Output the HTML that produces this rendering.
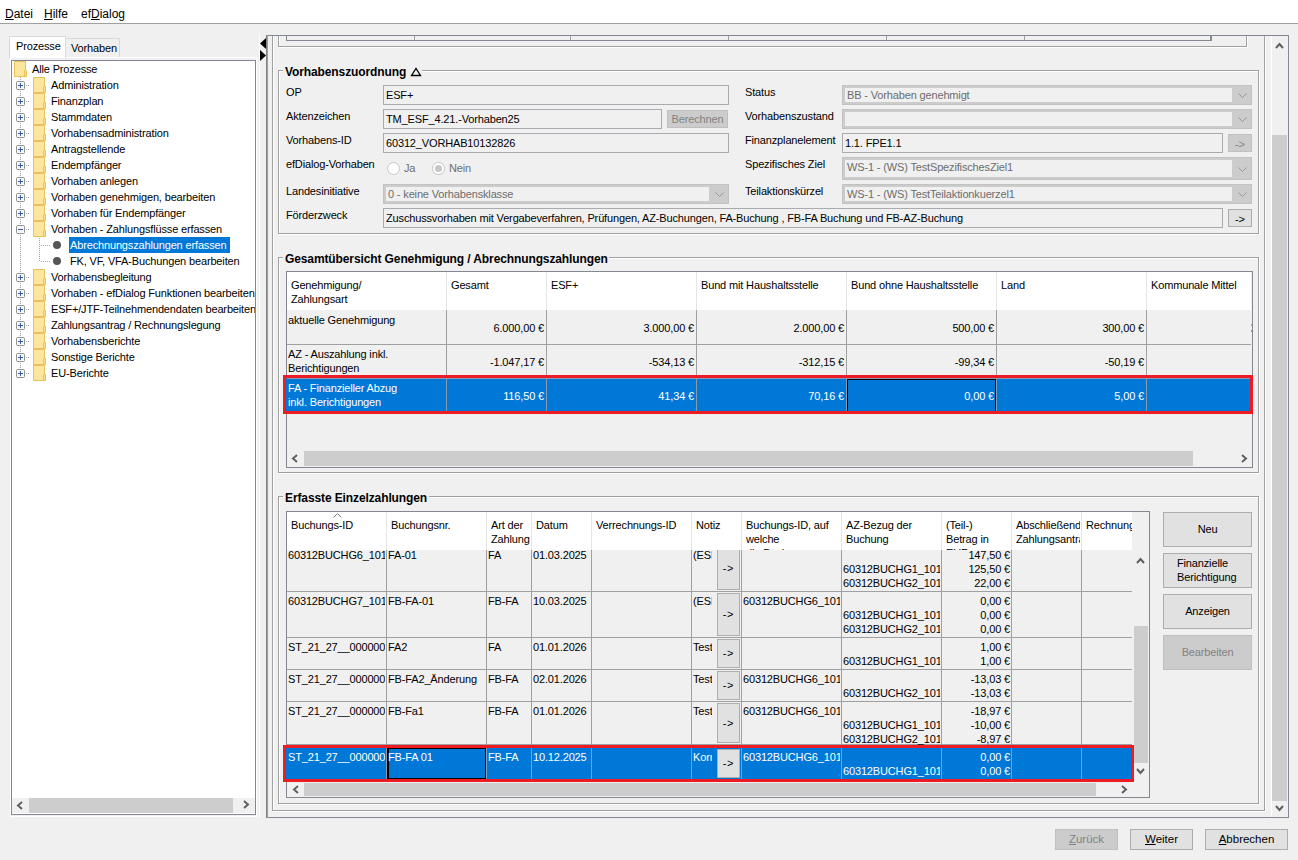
<!DOCTYPE html><html><head><meta charset="utf-8"><style>
*{margin:0;padding:0}
html,body{width:1298px;height:860px;overflow:hidden;background:#f0f0f0;position:relative}
.a{position:absolute}
.t{font-family:"Liberation Sans",sans-serif;font-size:11px;line-height:13px;white-space:nowrap;color:#000;letter-spacing:-0.15px}
.b{font-family:"Liberation Sans",sans-serif;font-size:12px;font-weight:bold;line-height:13px;white-space:nowrap;color:#000;letter-spacing:-0.11px}
.w{color:#fff}
.g{color:#6d6d6d}
svg{display:block}
u{text-decoration:underline;text-underline-offset:1px;text-decoration-thickness:1px}
</style></head><body><div class="a" style="left:0px;top:0px;width:1298px;height:23px;background:#fff"></div>
<div class="a" style="left:0px;top:23px;width:1298px;height:1px;background:#a0a0a0"></div>
<div class="a t" style="left:5px;top:7px;font-size:12px;letter-spacing:0;line-height:14px"><u>D</u>atei</div>
<div class="a t" style="left:44px;top:7px;font-size:12px;letter-spacing:0;line-height:14px"><u>H</u>ilfe</div>
<div class="a t" style="left:81px;top:7px;font-size:12px;letter-spacing:0;line-height:14px">ef<u>D</u>ialog</div>
<div class="a" style="left:10px;top:57px;width:247px;height:760px;border:1px solid #fff;box-sizing:border-box;"></div>
<div class="a" style="left:65px;top:38px;width:55px;height:19px;background:#f0f0f0;border:1px solid #d9d9d9;border-bottom:none;box-sizing:border-box"></div>
<div class="a" style="left:9px;top:36px;width:57px;height:22px;background:#fff;border:1px solid #d9d9d9;border-bottom:none;box-sizing:border-box"></div>
<div class="a t" style="left:16px;top:40px;">Prozesse</div>
<div class="a t" style="left:71px;top:42px;">Vorhaben</div>
<div class="a" style="left:11px;top:60px;width:245px;height:755px;border:1px solid #828790;box-sizing:border-box;background:#fff;"></div>
<div class="a" style="left:12px;top:61px;width:243px;height:736px;overflow:hidden">
<div class="a" style="left:8px;top:16px;width:1px;height:296px;background:repeating-linear-gradient(to bottom,#a0a0a0 0 1px,transparent 1px 2px)"></div>
<div class="a" style="left:27px;top:192px;width:1px;height:16px"></div>
<div class="a" style="left:2px;top:0px;width:13px;height:16px"><svg width="13" height="16" viewBox="0 0 13 16"><path d="M0.5 0.5H11.5V9.5H12.5V15.5H0.5Z" fill="#fbe08f" stroke="#e8c15a"/><path d="M1 1H11V15H1Z" fill="#fde9a8" opacity="0.6"/><path d="M10.5 9.5V15.5" stroke="#e8c15a"/></svg></div>
<div class="a t" style="left:20px;top:2px">Alle Prozesse</div>
<div class="a" style="left:14px;top:24px;width:4px;height:1px;background:repeating-linear-gradient(to right,#a0a0a0 0 1px,transparent 1px 2px)"></div>
<div class="a" style="left:4px;top:20px;width:9px;height:9px"><svg width="9" height="9"><rect x="0.5" y="0.5" width="8" height="8" rx="1" fill="#f7f7f7" stroke="#919191"/><path d="M2 4.5H7" stroke="#3b5ca0"/><path d="M4.5 2V7" stroke="#3b5ca0"/></svg></div>
<div class="a" style="left:21px;top:16px;width:13px;height:16px"><svg width="13" height="16" viewBox="0 0 13 16"><path d="M0.5 0.5H11.5V9.5H12.5V15.5H0.5Z" fill="#fbe08f" stroke="#e8c15a"/><path d="M1 1H11V15H1Z" fill="#fde9a8" opacity="0.6"/><path d="M10.5 9.5V15.5" stroke="#e8c15a"/></svg></div>
<div class="a t" style="left:39px;top:18px">Administration</div>
<div class="a" style="left:14px;top:40px;width:4px;height:1px;background:repeating-linear-gradient(to right,#a0a0a0 0 1px,transparent 1px 2px)"></div>
<div class="a" style="left:4px;top:36px;width:9px;height:9px"><svg width="9" height="9"><rect x="0.5" y="0.5" width="8" height="8" rx="1" fill="#f7f7f7" stroke="#919191"/><path d="M2 4.5H7" stroke="#3b5ca0"/><path d="M4.5 2V7" stroke="#3b5ca0"/></svg></div>
<div class="a" style="left:21px;top:32px;width:13px;height:16px"><svg width="13" height="16" viewBox="0 0 13 16"><path d="M0.5 0.5H11.5V9.5H12.5V15.5H0.5Z" fill="#fbe08f" stroke="#e8c15a"/><path d="M1 1H11V15H1Z" fill="#fde9a8" opacity="0.6"/><path d="M10.5 9.5V15.5" stroke="#e8c15a"/></svg></div>
<div class="a t" style="left:39px;top:34px">Finanzplan</div>
<div class="a" style="left:14px;top:56px;width:4px;height:1px;background:repeating-linear-gradient(to right,#a0a0a0 0 1px,transparent 1px 2px)"></div>
<div class="a" style="left:4px;top:52px;width:9px;height:9px"><svg width="9" height="9"><rect x="0.5" y="0.5" width="8" height="8" rx="1" fill="#f7f7f7" stroke="#919191"/><path d="M2 4.5H7" stroke="#3b5ca0"/><path d="M4.5 2V7" stroke="#3b5ca0"/></svg></div>
<div class="a" style="left:21px;top:48px;width:13px;height:16px"><svg width="13" height="16" viewBox="0 0 13 16"><path d="M0.5 0.5H11.5V9.5H12.5V15.5H0.5Z" fill="#fbe08f" stroke="#e8c15a"/><path d="M1 1H11V15H1Z" fill="#fde9a8" opacity="0.6"/><path d="M10.5 9.5V15.5" stroke="#e8c15a"/></svg></div>
<div class="a t" style="left:39px;top:50px">Stammdaten</div>
<div class="a" style="left:14px;top:72px;width:4px;height:1px;background:repeating-linear-gradient(to right,#a0a0a0 0 1px,transparent 1px 2px)"></div>
<div class="a" style="left:4px;top:68px;width:9px;height:9px"><svg width="9" height="9"><rect x="0.5" y="0.5" width="8" height="8" rx="1" fill="#f7f7f7" stroke="#919191"/><path d="M2 4.5H7" stroke="#3b5ca0"/><path d="M4.5 2V7" stroke="#3b5ca0"/></svg></div>
<div class="a" style="left:21px;top:64px;width:13px;height:16px"><svg width="13" height="16" viewBox="0 0 13 16"><path d="M0.5 0.5H11.5V9.5H12.5V15.5H0.5Z" fill="#fbe08f" stroke="#e8c15a"/><path d="M1 1H11V15H1Z" fill="#fde9a8" opacity="0.6"/><path d="M10.5 9.5V15.5" stroke="#e8c15a"/></svg></div>
<div class="a t" style="left:39px;top:66px">Vorhabensadministration</div>
<div class="a" style="left:14px;top:88px;width:4px;height:1px;background:repeating-linear-gradient(to right,#a0a0a0 0 1px,transparent 1px 2px)"></div>
<div class="a" style="left:4px;top:84px;width:9px;height:9px"><svg width="9" height="9"><rect x="0.5" y="0.5" width="8" height="8" rx="1" fill="#f7f7f7" stroke="#919191"/><path d="M2 4.5H7" stroke="#3b5ca0"/><path d="M4.5 2V7" stroke="#3b5ca0"/></svg></div>
<div class="a" style="left:21px;top:80px;width:13px;height:16px"><svg width="13" height="16" viewBox="0 0 13 16"><path d="M0.5 0.5H11.5V9.5H12.5V15.5H0.5Z" fill="#fbe08f" stroke="#e8c15a"/><path d="M1 1H11V15H1Z" fill="#fde9a8" opacity="0.6"/><path d="M10.5 9.5V15.5" stroke="#e8c15a"/></svg></div>
<div class="a t" style="left:39px;top:82px">Antragstellende</div>
<div class="a" style="left:14px;top:104px;width:4px;height:1px;background:repeating-linear-gradient(to right,#a0a0a0 0 1px,transparent 1px 2px)"></div>
<div class="a" style="left:4px;top:100px;width:9px;height:9px"><svg width="9" height="9"><rect x="0.5" y="0.5" width="8" height="8" rx="1" fill="#f7f7f7" stroke="#919191"/><path d="M2 4.5H7" stroke="#3b5ca0"/><path d="M4.5 2V7" stroke="#3b5ca0"/></svg></div>
<div class="a" style="left:21px;top:96px;width:13px;height:16px"><svg width="13" height="16" viewBox="0 0 13 16"><path d="M0.5 0.5H11.5V9.5H12.5V15.5H0.5Z" fill="#fbe08f" stroke="#e8c15a"/><path d="M1 1H11V15H1Z" fill="#fde9a8" opacity="0.6"/><path d="M10.5 9.5V15.5" stroke="#e8c15a"/></svg></div>
<div class="a t" style="left:39px;top:98px">Endempfänger</div>
<div class="a" style="left:14px;top:120px;width:4px;height:1px;background:repeating-linear-gradient(to right,#a0a0a0 0 1px,transparent 1px 2px)"></div>
<div class="a" style="left:4px;top:116px;width:9px;height:9px"><svg width="9" height="9"><rect x="0.5" y="0.5" width="8" height="8" rx="1" fill="#f7f7f7" stroke="#919191"/><path d="M2 4.5H7" stroke="#3b5ca0"/><path d="M4.5 2V7" stroke="#3b5ca0"/></svg></div>
<div class="a" style="left:21px;top:112px;width:13px;height:16px"><svg width="13" height="16" viewBox="0 0 13 16"><path d="M0.5 0.5H11.5V9.5H12.5V15.5H0.5Z" fill="#fbe08f" stroke="#e8c15a"/><path d="M1 1H11V15H1Z" fill="#fde9a8" opacity="0.6"/><path d="M10.5 9.5V15.5" stroke="#e8c15a"/></svg></div>
<div class="a t" style="left:39px;top:114px">Vorhaben anlegen</div>
<div class="a" style="left:14px;top:136px;width:4px;height:1px;background:repeating-linear-gradient(to right,#a0a0a0 0 1px,transparent 1px 2px)"></div>
<div class="a" style="left:4px;top:132px;width:9px;height:9px"><svg width="9" height="9"><rect x="0.5" y="0.5" width="8" height="8" rx="1" fill="#f7f7f7" stroke="#919191"/><path d="M2 4.5H7" stroke="#3b5ca0"/><path d="M4.5 2V7" stroke="#3b5ca0"/></svg></div>
<div class="a" style="left:21px;top:128px;width:13px;height:16px"><svg width="13" height="16" viewBox="0 0 13 16"><path d="M0.5 0.5H11.5V9.5H12.5V15.5H0.5Z" fill="#fbe08f" stroke="#e8c15a"/><path d="M1 1H11V15H1Z" fill="#fde9a8" opacity="0.6"/><path d="M10.5 9.5V15.5" stroke="#e8c15a"/></svg></div>
<div class="a t" style="left:39px;top:130px">Vorhaben genehmigen, bearbeiten</div>
<div class="a" style="left:14px;top:152px;width:4px;height:1px;background:repeating-linear-gradient(to right,#a0a0a0 0 1px,transparent 1px 2px)"></div>
<div class="a" style="left:4px;top:148px;width:9px;height:9px"><svg width="9" height="9"><rect x="0.5" y="0.5" width="8" height="8" rx="1" fill="#f7f7f7" stroke="#919191"/><path d="M2 4.5H7" stroke="#3b5ca0"/><path d="M4.5 2V7" stroke="#3b5ca0"/></svg></div>
<div class="a" style="left:21px;top:144px;width:13px;height:16px"><svg width="13" height="16" viewBox="0 0 13 16"><path d="M0.5 0.5H11.5V9.5H12.5V15.5H0.5Z" fill="#fbe08f" stroke="#e8c15a"/><path d="M1 1H11V15H1Z" fill="#fde9a8" opacity="0.6"/><path d="M10.5 9.5V15.5" stroke="#e8c15a"/></svg></div>
<div class="a t" style="left:39px;top:146px">Vorhaben für Endempfänger</div>
<div class="a" style="left:14px;top:168px;width:4px;height:1px;background:repeating-linear-gradient(to right,#a0a0a0 0 1px,transparent 1px 2px)"></div>
<div class="a" style="left:4px;top:164px;width:9px;height:9px"><svg width="9" height="9"><rect x="0.5" y="0.5" width="8" height="8" rx="1" fill="#f7f7f7" stroke="#919191"/><path d="M2 4.5H7" stroke="#3b5ca0"/></svg></div>
<div class="a" style="left:21px;top:160px;width:13px;height:16px"><svg width="13" height="16" viewBox="0 0 13 16"><path d="M0.5 0.5H11.5V9.5H12.5V15.5H0.5Z" fill="#fbe08f" stroke="#e8c15a"/><path d="M1 1H11V15H1Z" fill="#fde9a8" opacity="0.6"/><path d="M10.5 9.5V15.5" stroke="#e8c15a"/></svg></div>
<div class="a t" style="left:39px;top:162px">Vorhaben - Zahlungsflüsse erfassen</div>
<div class="a" style="left:29px;top:184px;width:10px;height:1px;background:repeating-linear-gradient(to right,#a0a0a0 0 1px,transparent 1px 2px)"></div>
<div class="a" style="left:41px;top:180px;width:8px;height:8px;border-radius:50%;background:#555"></div>
<div class="a t w" style="left:57px;top:176px;height:16px;width:161px;background:#0078d7;padding-left:1px;box-sizing:border-box;line-height:16px">Abrechnungszahlungen erfassen</div>
<div class="a" style="left:29px;top:200px;width:10px;height:1px;background:repeating-linear-gradient(to right,#a0a0a0 0 1px,transparent 1px 2px)"></div>
<div class="a" style="left:41px;top:196px;width:8px;height:8px;border-radius:50%;background:#555"></div>
<div class="a t" style="left:58px;top:194px">FK, VF, VFA-Buchungen bearbeiten</div>
<div class="a" style="left:14px;top:216px;width:4px;height:1px;background:repeating-linear-gradient(to right,#a0a0a0 0 1px,transparent 1px 2px)"></div>
<div class="a" style="left:4px;top:212px;width:9px;height:9px"><svg width="9" height="9"><rect x="0.5" y="0.5" width="8" height="8" rx="1" fill="#f7f7f7" stroke="#919191"/><path d="M2 4.5H7" stroke="#3b5ca0"/><path d="M4.5 2V7" stroke="#3b5ca0"/></svg></div>
<div class="a" style="left:21px;top:208px;width:13px;height:16px"><svg width="13" height="16" viewBox="0 0 13 16"><path d="M0.5 0.5H11.5V9.5H12.5V15.5H0.5Z" fill="#fbe08f" stroke="#e8c15a"/><path d="M1 1H11V15H1Z" fill="#fde9a8" opacity="0.6"/><path d="M10.5 9.5V15.5" stroke="#e8c15a"/></svg></div>
<div class="a t" style="left:39px;top:210px">Vorhabensbegleitung</div>
<div class="a" style="left:14px;top:232px;width:4px;height:1px;background:repeating-linear-gradient(to right,#a0a0a0 0 1px,transparent 1px 2px)"></div>
<div class="a" style="left:4px;top:228px;width:9px;height:9px"><svg width="9" height="9"><rect x="0.5" y="0.5" width="8" height="8" rx="1" fill="#f7f7f7" stroke="#919191"/><path d="M2 4.5H7" stroke="#3b5ca0"/><path d="M4.5 2V7" stroke="#3b5ca0"/></svg></div>
<div class="a" style="left:21px;top:224px;width:13px;height:16px"><svg width="13" height="16" viewBox="0 0 13 16"><path d="M0.5 0.5H11.5V9.5H12.5V15.5H0.5Z" fill="#fbe08f" stroke="#e8c15a"/><path d="M1 1H11V15H1Z" fill="#fde9a8" opacity="0.6"/><path d="M10.5 9.5V15.5" stroke="#e8c15a"/></svg></div>
<div class="a t" style="left:39px;top:226px">Vorhaben - efDialog Funktionen bearbeiten</div>
<div class="a" style="left:14px;top:248px;width:4px;height:1px;background:repeating-linear-gradient(to right,#a0a0a0 0 1px,transparent 1px 2px)"></div>
<div class="a" style="left:4px;top:244px;width:9px;height:9px"><svg width="9" height="9"><rect x="0.5" y="0.5" width="8" height="8" rx="1" fill="#f7f7f7" stroke="#919191"/><path d="M2 4.5H7" stroke="#3b5ca0"/><path d="M4.5 2V7" stroke="#3b5ca0"/></svg></div>
<div class="a" style="left:21px;top:240px;width:13px;height:16px"><svg width="13" height="16" viewBox="0 0 13 16"><path d="M0.5 0.5H11.5V9.5H12.5V15.5H0.5Z" fill="#fbe08f" stroke="#e8c15a"/><path d="M1 1H11V15H1Z" fill="#fde9a8" opacity="0.6"/><path d="M10.5 9.5V15.5" stroke="#e8c15a"/></svg></div>
<div class="a t" style="left:39px;top:242px">ESF+/JTF-Teilnehmendendaten bearbeiten</div>
<div class="a" style="left:14px;top:264px;width:4px;height:1px;background:repeating-linear-gradient(to right,#a0a0a0 0 1px,transparent 1px 2px)"></div>
<div class="a" style="left:4px;top:260px;width:9px;height:9px"><svg width="9" height="9"><rect x="0.5" y="0.5" width="8" height="8" rx="1" fill="#f7f7f7" stroke="#919191"/><path d="M2 4.5H7" stroke="#3b5ca0"/><path d="M4.5 2V7" stroke="#3b5ca0"/></svg></div>
<div class="a" style="left:21px;top:256px;width:13px;height:16px"><svg width="13" height="16" viewBox="0 0 13 16"><path d="M0.5 0.5H11.5V9.5H12.5V15.5H0.5Z" fill="#fbe08f" stroke="#e8c15a"/><path d="M1 1H11V15H1Z" fill="#fde9a8" opacity="0.6"/><path d="M10.5 9.5V15.5" stroke="#e8c15a"/></svg></div>
<div class="a t" style="left:39px;top:258px">Zahlungsantrag / Rechnungslegung</div>
<div class="a" style="left:14px;top:280px;width:4px;height:1px;background:repeating-linear-gradient(to right,#a0a0a0 0 1px,transparent 1px 2px)"></div>
<div class="a" style="left:4px;top:276px;width:9px;height:9px"><svg width="9" height="9"><rect x="0.5" y="0.5" width="8" height="8" rx="1" fill="#f7f7f7" stroke="#919191"/><path d="M2 4.5H7" stroke="#3b5ca0"/><path d="M4.5 2V7" stroke="#3b5ca0"/></svg></div>
<div class="a" style="left:21px;top:272px;width:13px;height:16px"><svg width="13" height="16" viewBox="0 0 13 16"><path d="M0.5 0.5H11.5V9.5H12.5V15.5H0.5Z" fill="#fbe08f" stroke="#e8c15a"/><path d="M1 1H11V15H1Z" fill="#fde9a8" opacity="0.6"/><path d="M10.5 9.5V15.5" stroke="#e8c15a"/></svg></div>
<div class="a t" style="left:39px;top:274px">Vorhabensberichte</div>
<div class="a" style="left:14px;top:296px;width:4px;height:1px;background:repeating-linear-gradient(to right,#a0a0a0 0 1px,transparent 1px 2px)"></div>
<div class="a" style="left:4px;top:292px;width:9px;height:9px"><svg width="9" height="9"><rect x="0.5" y="0.5" width="8" height="8" rx="1" fill="#f7f7f7" stroke="#919191"/><path d="M2 4.5H7" stroke="#3b5ca0"/><path d="M4.5 2V7" stroke="#3b5ca0"/></svg></div>
<div class="a" style="left:21px;top:288px;width:13px;height:16px"><svg width="13" height="16" viewBox="0 0 13 16"><path d="M0.5 0.5H11.5V9.5H12.5V15.5H0.5Z" fill="#fbe08f" stroke="#e8c15a"/><path d="M1 1H11V15H1Z" fill="#fde9a8" opacity="0.6"/><path d="M10.5 9.5V15.5" stroke="#e8c15a"/></svg></div>
<div class="a t" style="left:39px;top:290px">Sonstige Berichte</div>
<div class="a" style="left:14px;top:312px;width:4px;height:1px;background:repeating-linear-gradient(to right,#a0a0a0 0 1px,transparent 1px 2px)"></div>
<div class="a" style="left:4px;top:308px;width:9px;height:9px"><svg width="9" height="9"><rect x="0.5" y="0.5" width="8" height="8" rx="1" fill="#f7f7f7" stroke="#919191"/><path d="M2 4.5H7" stroke="#3b5ca0"/><path d="M4.5 2V7" stroke="#3b5ca0"/></svg></div>
<div class="a" style="left:21px;top:304px;width:13px;height:16px"><svg width="13" height="16" viewBox="0 0 13 16"><path d="M0.5 0.5H11.5V9.5H12.5V15.5H0.5Z" fill="#fbe08f" stroke="#e8c15a"/><path d="M1 1H11V15H1Z" fill="#fde9a8" opacity="0.6"/><path d="M10.5 9.5V15.5" stroke="#e8c15a"/></svg></div>
<div class="a t" style="left:39px;top:306px">EU-Berichte</div>
<div class="a" style="left:27px;top:177px;width:1px;height:24px;background:repeating-linear-gradient(to bottom,#a0a0a0 0 1px,transparent 1px 2px)"></div>
</div>
<div class="a" style="left:12px;top:798px;width:243px;height:15px;background:#f0f0f0"></div>
<div class="a" style="left:29px;top:798px;width:204px;height:15px;background:#cdcdcd"></div>
<div class="a" style="left:16px;top:801px"><svg width="8" height="9"><path d="M6 1L2 4.5L6 8" fill="none" stroke="#606060" stroke-width="2"/></svg></div>
<div class="a" style="left:242px;top:800px"><svg width="8" height="9"><path d="M2 1L6 4.5L2 8" fill="none" stroke="#606060" stroke-width="2"/></svg></div>
<div class="a" style="left:259px;top:35px;width:1px;height:783px;background:#fff"></div>
<div class="a" style="left:260px;top:37px"><svg width="7" height="25"><path d="M6 1V12L0 6.5Z" fill="#000"/><path d="M0 13V24L6 18.5Z" fill="#000"/></svg></div>
<div class="a" style="left:266px;top:35px;width:1023px;height:783px;border:1px solid #828790;box-sizing:border-box"></div>
<div class="a" style="left:266px;top:35px;width:2px;height:783px;background:linear-gradient(to right,#6f737a,#a9acb2)"></div>
<div class="a" style="left:1272px;top:36px;width:16px;height:781px;background:#f0f0f0"></div>
<div class="a" style="left:1271px;top:36px;width:1px;height:781px;background:#fff"></div>
<div class="a" style="left:1272px;top:135px;width:15px;height:666px;background:#cdcdcd"></div>
<div class="a" style="left:1275px;top:42px"><svg width="9" height="7"><path d="M1 6L4.5 2L8 6" fill="none" stroke="#606060" stroke-width="2"/></svg></div>
<div class="a" style="left:1275px;top:805px"><svg width="9" height="7"><path d="M1 1L4.5 5L8 1" fill="none" stroke="#606060" stroke-width="2"/></svg></div>
<div class="a" style="left:0;top:36px;width:1270px;height:781px;overflow:hidden"><div class="a" style="left:0;top:-36px;width:1270px;height:860px">
<div class="a" style="left:273px;top:21px;width:993px;height:791px;border:1px solid #fff;box-sizing:border-box;"></div>
<div class="a" style="left:272px;top:20px;width:993px;height:791px;border:1px solid #a0a0a0;box-sizing:border-box;"></div>
<div class="a" style="left:279px;top:11px;width:969px;height:37px;border:1px solid #fff;box-sizing:border-box;"></div>
<div class="a" style="left:278px;top:10px;width:969px;height:37px;border:1px solid #a0a0a0;box-sizing:border-box;"></div>
<div class="a" style="left:286px;top:0px;width:926px;height:41px;border:1px solid #828790;box-sizing:border-box;"></div>
<div class="a" style="left:1210px;top:36px;width:1px;height:5px;background:#828790"></div>
<div class="a" style="left:414px;top:36px;width:1px;height:4px;background:#a0a0a0"></div>
<div class="a" style="left:570px;top:36px;width:1px;height:4px;background:#a0a0a0"></div>
<div class="a" style="left:728px;top:36px;width:1px;height:4px;background:#a0a0a0"></div>
<div class="a" style="left:886px;top:36px;width:1px;height:4px;background:#a0a0a0"></div>
<div class="a" style="left:1024px;top:36px;width:1px;height:4px;background:#a0a0a0"></div>
<div class="a" style="left:279px;top:71px;width:981px;height:164px;border:1px solid #fff;box-sizing:border-box;"></div>
<div class="a" style="left:278px;top:70px;width:981px;height:164px;border:1px solid #a0a0a0;box-sizing:border-box;"></div>
<div class="a" style="left:283px;top:63px;width:139px;height:14px;background:#f0f0f0"></div>
<div class="a b" style="left:285px;top:66px">Vorhabenszuordnung</div>
<div class="a" style="left:410px;top:67px"><svg width="12" height="10"><path d="M1.5 8.5H10.5L6 1.5Z" fill="none" stroke="#000" stroke-width="1.3"/></svg></div>
<div class="a t" style="left:286px;top:86px;">OP</div>
<div class="a t" style="left:286px;top:110px;">Aktenzeichen</div>
<div class="a t" style="left:286px;top:134px;">Vorhabens-ID</div>
<div class="a t" style="left:286px;top:158px;">efDialog-Vorhaben</div>
<div class="a t" style="left:286px;top:185px;">Landesinitiative</div>
<div class="a t" style="left:286px;top:209px;">Förderzweck</div>
<div class="a" style="left:383px;top:85px;width:346px;height:20px;border:1px solid #a9abb1;box-sizing:border-box;background:#f0f0f0;"></div>
<div class="a t" style="left:386px;top:89px;">ESF+</div>
<div class="a" style="left:383px;top:109px;width:279px;height:20px;border:1px solid #a9abb1;box-sizing:border-box;background:#f0f0f0;"></div>
<div class="a t" style="left:386px;top:113px;">TM_ESF_4.21.-Vorhaben25</div>
<div class="a t" style="left:667px;top:110px;width:61px;height:18px;box-sizing:border-box;border:1px solid #bfbfbf;background:#cccccc;color:#838383;text-align:center;"><div style="position:absolute;left:0;right:0;top:2px">Berechnen</div></div>
<div class="a" style="left:383px;top:133px;width:346px;height:20px;border:1px solid #a9abb1;box-sizing:border-box;background:#f0f0f0;"></div>
<div class="a t" style="left:386px;top:137px;">60312_VORHAB10132826</div>
<div class="a" style="left:387px;top:162px"><svg width="13" height="13"><circle cx="6.5" cy="6.5" r="6" fill="#fff" stroke="#c4c4c4"/></svg></div>
<div class="a t g" style="left:404px;top:162px;">Ja</div>
<div class="a" style="left:432px;top:162px"><svg width="13" height="13"><circle cx="6.5" cy="6.5" r="6" fill="#fff" stroke="#c4c4c4"/><circle cx="6.5" cy="6.5" r="3.5" fill="#c6c6c6"/></svg></div>
<div class="a t g" style="left:449px;top:162px;">Nein</div>
<div class="a" style="left:383px;top:184px;width:346px;height:20px;background:#cccccc;border:1px solid #c2c2c2;box-sizing:border-box"></div>
<div class="a" style="left:386px;top:187px;width:323px;height:14px;background:#f0f0f0"></div>
<div class="a" style="left:715px;top:192px"><svg width="10" height="6"><path d="M0.5 0.5L4.5 4.5L8.5 0.5" fill="none" stroke="#9a9a9a"/></svg></div>
<div class="a t g" style="left:388px;top:188px;">0 - keine Vorhabensklasse</div>
<div class="a" style="left:383px;top:208px;width:840px;height:20px;border:1px solid #a9abb1;box-sizing:border-box;background:#f0f0f0;"></div>
<div class="a t" style="left:386px;top:212px;">Zuschussvorhaben mit Vergabeverfahren, Prüfungen, AZ-Buchungen, FA-Buchung , FB-FA Buchung und FB-AZ-Buchung</div>
<div class="a t" style="left:1228px;top:209px;width:24px;height:18px;box-sizing:border-box;border:1px solid #adadad;background:#e1e1e1;color:#000;text-align:center;"><div style="position:absolute;left:0;right:0;top:3px">-&gt;</div></div>
<div class="a t" style="left:745px;top:86px;">Status</div>
<div class="a t" style="left:745px;top:110px;">Vorhabenszustand</div>
<div class="a t" style="left:745px;top:134px;">Finanzplanelement</div>
<div class="a t" style="left:745px;top:158px;">Spezifisches Ziel</div>
<div class="a t" style="left:745px;top:185px;">Teilaktionskürzel</div>
<div class="a" style="left:842px;top:85px;width:410px;height:20px;background:#cccccc;border:1px solid #c2c2c2;box-sizing:border-box"></div>
<div class="a" style="left:845px;top:88px;width:387px;height:14px;background:#f0f0f0"></div>
<div class="a" style="left:1238px;top:93px"><svg width="10" height="6"><path d="M0.5 0.5L4.5 4.5L8.5 0.5" fill="none" stroke="#9a9a9a"/></svg></div>
<div class="a t g" style="left:847px;top:89px;">BB - Vorhaben genehmigt</div>
<div class="a" style="left:842px;top:109px;width:410px;height:20px;background:#cccccc;border:1px solid #c2c2c2;box-sizing:border-box"></div>
<div class="a" style="left:845px;top:112px;width:387px;height:14px;background:#f0f0f0"></div>
<div class="a" style="left:1238px;top:117px"><svg width="10" height="6"><path d="M0.5 0.5L4.5 4.5L8.5 0.5" fill="none" stroke="#9a9a9a"/></svg></div>
<div class="a" style="left:842px;top:133px;width:381px;height:20px;border:1px solid #a9abb1;box-sizing:border-box;background:#f0f0f0;"></div>
<div class="a t" style="left:845px;top:137px;">1.1. FPE1.1</div>
<div class="a t" style="left:1228px;top:134px;width:24px;height:18px;box-sizing:border-box;border:1px solid #bfbfbf;background:#cccccc;color:#838383;text-align:center;"><div style="position:absolute;left:0;right:0;top:3px">-&gt;</div></div>
<div class="a" style="left:842px;top:157px;width:410px;height:23px;background:#cccccc;border:1px solid #c2c2c2;box-sizing:border-box"></div>
<div class="a" style="left:845px;top:160px;width:387px;height:17px;background:#f0f0f0"></div>
<div class="a" style="left:1238px;top:167px"><svg width="10" height="6"><path d="M0.5 0.5L4.5 4.5L8.5 0.5" fill="none" stroke="#9a9a9a"/></svg></div>
<div class="a t g" style="left:847px;top:161px;">WS-1 - (WS) TestSpezifischesZiel1</div>
<div class="a" style="left:842px;top:184px;width:410px;height:20px;background:#cccccc;border:1px solid #c2c2c2;box-sizing:border-box"></div>
<div class="a" style="left:845px;top:187px;width:387px;height:14px;background:#f0f0f0"></div>
<div class="a" style="left:1238px;top:192px"><svg width="10" height="6"><path d="M0.5 0.5L4.5 4.5L8.5 0.5" fill="none" stroke="#9a9a9a"/></svg></div>
<div class="a t g" style="left:847px;top:188px;">WS-1 - (WS) TestTeilaktionkuerzel1</div>
<div class="a" style="left:279px;top:258px;width:981px;height:216px;border:1px solid #fff;box-sizing:border-box;"></div>
<div class="a" style="left:278px;top:257px;width:981px;height:216px;border:1px solid #a0a0a0;box-sizing:border-box;"></div>
<div class="a" style="left:283px;top:250px;width:326px;height:14px;background:#f0f0f0"></div>
<div class="a b" style="left:285px;top:253px">Gesamtübersicht Genehmigung / Abrechnungszahlungen</div>
<div class="a" style="left:286px;top:271px;width:967px;height:197px;border:1px solid #828790;box-sizing:border-box;background:#f0f0f0;"></div>
<div class="a" style="left:287px;top:272px;width:964px;height:38px;background:#fff"></div>
<div class="a t" style="left:291px;top:279px;line-height:13.5px">Genehmigung/<br>Zahlungsart</div>
<div class="a" style="left:446px;top:272px;width:1px;height:38px;background:#e5e5e5"></div>
<div class="a t" style="left:451px;top:279px;line-height:13.5px">Gesamt</div>
<div class="a" style="left:546px;top:272px;width:1px;height:38px;background:#e5e5e5"></div>
<div class="a t" style="left:551px;top:279px;line-height:13.5px">ESF+</div>
<div class="a" style="left:696px;top:272px;width:1px;height:38px;background:#e5e5e5"></div>
<div class="a t" style="left:701px;top:279px;line-height:13.5px">Bund mit Haushaltsstelle</div>
<div class="a" style="left:846px;top:272px;width:1px;height:38px;background:#e5e5e5"></div>
<div class="a t" style="left:851px;top:279px;line-height:13.5px">Bund ohne Haushaltsstelle</div>
<div class="a" style="left:996px;top:272px;width:1px;height:38px;background:#e5e5e5"></div>
<div class="a t" style="left:1001px;top:279px;line-height:13.5px">Land</div>
<div class="a" style="left:1146px;top:272px;width:1px;height:38px;background:#e5e5e5"></div>
<div class="a t" style="left:1151px;top:279px;line-height:13.5px">Kommunale Mittel</div>
<div class="a" style="left:287px;top:344px;width:964px;height:1px;background:#a0a0a0"></div>
<div class="a" style="left:446px;top:310px;width:1px;height:35px;background:#a0a0a0"></div>
<div class="a" style="left:546px;top:310px;width:1px;height:35px;background:#a0a0a0"></div>
<div class="a" style="left:696px;top:310px;width:1px;height:35px;background:#a0a0a0"></div>
<div class="a" style="left:846px;top:310px;width:1px;height:35px;background:#a0a0a0"></div>
<div class="a" style="left:996px;top:310px;width:1px;height:35px;background:#a0a0a0"></div>
<div class="a" style="left:1146px;top:310px;width:1px;height:35px;background:#a0a0a0"></div>
<div class="a t" style="left:288px;top:313px;line-height:14px">aktuelle Genehmigung</div>
<div class="a t" style="left:244px;width:300px;top:322px;text-align:right;">6.000,00 €</div>
<div class="a t" style="left:394px;width:300px;top:322px;text-align:right;">3.000,00 €</div>
<div class="a t" style="left:544px;width:300px;top:322px;text-align:right;">2.000,00 €</div>
<div class="a t" style="left:694px;width:300px;top:322px;text-align:right;">500,00 €</div>
<div class="a t" style="left:844px;width:300px;top:322px;text-align:right;">300,00 €</div>
<div class="a" style="left:287px;top:376px;width:964px;height:1px;background:#a0a0a0"></div>
<div class="a" style="left:446px;top:345px;width:1px;height:32px;background:#a0a0a0"></div>
<div class="a" style="left:546px;top:345px;width:1px;height:32px;background:#a0a0a0"></div>
<div class="a" style="left:696px;top:345px;width:1px;height:32px;background:#a0a0a0"></div>
<div class="a" style="left:846px;top:345px;width:1px;height:32px;background:#a0a0a0"></div>
<div class="a" style="left:996px;top:345px;width:1px;height:32px;background:#a0a0a0"></div>
<div class="a" style="left:1146px;top:345px;width:1px;height:32px;background:#a0a0a0"></div>
<div class="a t" style="left:288px;top:347px;line-height:14px">AZ - Auszahlung inkl.<br>Berichtigungen</div>
<div class="a t" style="left:244px;width:300px;top:356px;text-align:right;">-1.047,17 €</div>
<div class="a t" style="left:394px;width:300px;top:356px;text-align:right;">-534,13 €</div>
<div class="a t" style="left:544px;width:300px;top:356px;text-align:right;">-312,15 €</div>
<div class="a t" style="left:694px;width:300px;top:356px;text-align:right;">-99,34 €</div>
<div class="a t" style="left:844px;width:300px;top:356px;text-align:right;">-50,19 €</div>
<div class="a" style="left:1251px;top:324px;width:1px;height:2px;background:#e39a3a"></div>
<div class="a" style="left:1251px;top:330px;width:1px;height:2px;background:#d9822b"></div>
<div class="a" style="left:286px;top:378px;width:964px;height:33px;background:#0078d7"></div>
<div class="a" style="left:287px;top:378px;width:963px;height:1px;background:#8a9ab0"></div>
<div class="a" style="left:446px;top:378px;width:1px;height:33px;background:#8a9ab0"></div>
<div class="a" style="left:546px;top:378px;width:1px;height:33px;background:#8a9ab0"></div>
<div class="a" style="left:696px;top:378px;width:1px;height:33px;background:#8a9ab0"></div>
<div class="a" style="left:846px;top:378px;width:1px;height:33px;background:#8a9ab0"></div>
<div class="a" style="left:996px;top:378px;width:1px;height:33px;background:#8a9ab0"></div>
<div class="a" style="left:1146px;top:378px;width:1px;height:33px;background:#8a9ab0"></div>
<div class="a" style="left:847px;top:379px;width:149px;height:32px;border:1px solid #000;border-bottom:none;box-sizing:border-box"></div>
<div class="a t w" style="left:288px;top:381px;line-height:14px">FA - Finanzieller Abzug<br>inkl. Berichtigungen</div>
<div class="a t w" style="left:244px;width:300px;top:390px;text-align:right;">116,50 €</div>
<div class="a t w" style="left:394px;width:300px;top:390px;text-align:right;">41,34 €</div>
<div class="a t w" style="left:544px;width:300px;top:390px;text-align:right;">70,16 €</div>
<div class="a t w" style="left:694px;width:300px;top:390px;text-align:right;">0,00 €</div>
<div class="a t w" style="left:844px;width:300px;top:390px;text-align:right;">5,00 €</div>
<div class="a" style="left:283px;top:375px;width:970px;height:39px;border:3px solid #ed1c24;box-sizing:border-box"></div>
<div class="a" style="left:287px;top:450px;width:965px;height:17px;background:#f0f0f0"></div>
<div class="a" style="left:304px;top:451px;width:889px;height:15px;background:#cdcdcd"></div>
<div class="a" style="left:291px;top:454px"><svg width="8" height="9"><path d="M6 1L2 4.5L6 8" fill="none" stroke="#606060" stroke-width="2"/></svg></div>
<div class="a" style="left:1240px;top:454px"><svg width="8" height="9"><path d="M2 1L6 4.5L2 8" fill="none" stroke="#606060" stroke-width="2"/></svg></div>
<div class="a" style="left:279px;top:497px;width:981px;height:308px;border:1px solid #fff;box-sizing:border-box;"></div>
<div class="a" style="left:278px;top:496px;width:981px;height:308px;border:1px solid #a0a0a0;box-sizing:border-box;"></div>
<div class="a" style="left:283px;top:489px;width:146px;height:14px;background:#f0f0f0"></div>
<div class="a b" style="left:285px;top:492px">Erfasste Einzelzahlungen</div>
<div class="a" style="left:286px;top:511px;width:864px;height:287px;border:1px solid #828790;box-sizing:border-box;background:#f0f0f0;"></div>
<div class="a" style="left:287px;top:512px;width:845px;height:269px;overflow:hidden">
<div class="a" style="left:0px;top:79px;width:845px;height:1px;background:#a0a0a0"></div>
<div class="a" style="left:99px;top:0px;width:1px;height:80px;background:#a0a0a0"></div>
<div class="a" style="left:199px;top:0px;width:1px;height:80px;background:#a0a0a0"></div>
<div class="a" style="left:244px;top:0px;width:1px;height:80px;background:#a0a0a0"></div>
<div class="a" style="left:304px;top:0px;width:1px;height:80px;background:#a0a0a0"></div>
<div class="a" style="left:404px;top:0px;width:1px;height:80px;background:#a0a0a0"></div>
<div class="a" style="left:454px;top:0px;width:1px;height:80px;background:#a0a0a0"></div>
<div class="a" style="left:554px;top:0px;width:1px;height:80px;background:#a0a0a0"></div>
<div class="a" style="left:654px;top:0px;width:1px;height:80px;background:#a0a0a0"></div>
<div class="a" style="left:724px;top:0px;width:1px;height:80px;background:#a0a0a0"></div>
<div class="a" style="left:794px;top:0px;width:1px;height:80px;background:#a0a0a0"></div>
<div class="a" style="left:894px;top:0px;width:1px;height:80px;background:#a0a0a0"></div>
<div class="a t" style="left:1px;top:37px;width:97px;overflow:hidden">60312BUCHG6_1013</div>
<div class="a t" style="left:101px;top:37px;width:97px;overflow:hidden">FA-01</div>
<div class="a t" style="left:201px;top:37px;width:42px;overflow:hidden">FA</div>
<div class="a t" style="left:246px;top:37px;width:57px;overflow:hidden">01.03.2025</div>
<div class="a t" style="left:406px;top:37px;width:19px;overflow:hidden">(ESF</div>
<div class="a t" style="left:430px;top:35px;width:23px;height:43px;box-sizing:border-box;border:1px solid #adadad;background:#e1e1e1;display:flex;align-items:center;justify-content:center;letter-spacing:0.6px">-&gt;</div>
<div class="a t" style="left:556px;top:51px;width:97px;overflow:hidden">60312BUCHG1_1013</div>
<div class="a t" style="left:556px;top:65px;width:97px;overflow:hidden">60312BUCHG2_1013</div>
<div class="a t" style="left:-287px;top:37px;left:0;width:723px;text-align:right">147,50 €</div>
<div class="a t" style="left:-287px;top:51px;left:0;width:723px;text-align:right">125,50 €</div>
<div class="a t" style="left:-287px;top:65px;left:0;width:723px;text-align:right">22,00 €</div>
<div class="a" style="left:0px;top:125px;width:845px;height:1px;background:#a0a0a0"></div>
<div class="a" style="left:99px;top:80px;width:1px;height:46px;background:#a0a0a0"></div>
<div class="a" style="left:199px;top:80px;width:1px;height:46px;background:#a0a0a0"></div>
<div class="a" style="left:244px;top:80px;width:1px;height:46px;background:#a0a0a0"></div>
<div class="a" style="left:304px;top:80px;width:1px;height:46px;background:#a0a0a0"></div>
<div class="a" style="left:404px;top:80px;width:1px;height:46px;background:#a0a0a0"></div>
<div class="a" style="left:454px;top:80px;width:1px;height:46px;background:#a0a0a0"></div>
<div class="a" style="left:554px;top:80px;width:1px;height:46px;background:#a0a0a0"></div>
<div class="a" style="left:654px;top:80px;width:1px;height:46px;background:#a0a0a0"></div>
<div class="a" style="left:724px;top:80px;width:1px;height:46px;background:#a0a0a0"></div>
<div class="a" style="left:794px;top:80px;width:1px;height:46px;background:#a0a0a0"></div>
<div class="a" style="left:894px;top:80px;width:1px;height:46px;background:#a0a0a0"></div>
<div class="a t" style="left:1px;top:83px;width:97px;overflow:hidden">60312BUCHG7_1013</div>
<div class="a t" style="left:101px;top:83px;width:97px;overflow:hidden">FB-FA-01</div>
<div class="a t" style="left:201px;top:83px;width:42px;overflow:hidden">FB-FA</div>
<div class="a t" style="left:246px;top:83px;width:57px;overflow:hidden">10.03.2025</div>
<div class="a t" style="left:406px;top:83px;width:19px;overflow:hidden">(ESF</div>
<div class="a t" style="left:456px;top:83px;width:97px;overflow:hidden">60312BUCHG6_1013</div>
<div class="a t" style="left:430px;top:81px;width:23px;height:43px;box-sizing:border-box;border:1px solid #adadad;background:#e1e1e1;display:flex;align-items:center;justify-content:center;letter-spacing:0.6px">-&gt;</div>
<div class="a t" style="left:556px;top:97px;width:97px;overflow:hidden">60312BUCHG1_1013</div>
<div class="a t" style="left:556px;top:111px;width:97px;overflow:hidden">60312BUCHG2_1013</div>
<div class="a t" style="left:-287px;top:83px;left:0;width:723px;text-align:right">0,00 €</div>
<div class="a t" style="left:-287px;top:97px;left:0;width:723px;text-align:right">0,00 €</div>
<div class="a t" style="left:-287px;top:111px;left:0;width:723px;text-align:right">0,00 €</div>
<div class="a" style="left:0px;top:157px;width:845px;height:1px;background:#a0a0a0"></div>
<div class="a" style="left:99px;top:126px;width:1px;height:32px;background:#a0a0a0"></div>
<div class="a" style="left:199px;top:126px;width:1px;height:32px;background:#a0a0a0"></div>
<div class="a" style="left:244px;top:126px;width:1px;height:32px;background:#a0a0a0"></div>
<div class="a" style="left:304px;top:126px;width:1px;height:32px;background:#a0a0a0"></div>
<div class="a" style="left:404px;top:126px;width:1px;height:32px;background:#a0a0a0"></div>
<div class="a" style="left:454px;top:126px;width:1px;height:32px;background:#a0a0a0"></div>
<div class="a" style="left:554px;top:126px;width:1px;height:32px;background:#a0a0a0"></div>
<div class="a" style="left:654px;top:126px;width:1px;height:32px;background:#a0a0a0"></div>
<div class="a" style="left:724px;top:126px;width:1px;height:32px;background:#a0a0a0"></div>
<div class="a" style="left:794px;top:126px;width:1px;height:32px;background:#a0a0a0"></div>
<div class="a" style="left:894px;top:126px;width:1px;height:32px;background:#a0a0a0"></div>
<div class="a t" style="left:1px;top:129px;width:97px;overflow:hidden">ST_21_27__000000</div>
<div class="a t" style="left:101px;top:129px;width:97px;overflow:hidden">FA2</div>
<div class="a t" style="left:201px;top:129px;width:42px;overflow:hidden">FA</div>
<div class="a t" style="left:246px;top:129px;width:57px;overflow:hidden">01.01.2026</div>
<div class="a t" style="left:406px;top:129px;width:19px;overflow:hidden">Test</div>
<div class="a t" style="left:430px;top:127px;width:23px;height:29px;box-sizing:border-box;border:1px solid #adadad;background:#e1e1e1;display:flex;align-items:center;justify-content:center;letter-spacing:0.6px">-&gt;</div>
<div class="a t" style="left:556px;top:143px;width:97px;overflow:hidden">60312BUCHG1_1013</div>
<div class="a t" style="left:-287px;top:129px;left:0;width:723px;text-align:right">1,00 €</div>
<div class="a t" style="left:-287px;top:143px;left:0;width:723px;text-align:right">1,00 €</div>
<div class="a" style="left:0px;top:189px;width:845px;height:1px;background:#a0a0a0"></div>
<div class="a" style="left:99px;top:158px;width:1px;height:32px;background:#a0a0a0"></div>
<div class="a" style="left:199px;top:158px;width:1px;height:32px;background:#a0a0a0"></div>
<div class="a" style="left:244px;top:158px;width:1px;height:32px;background:#a0a0a0"></div>
<div class="a" style="left:304px;top:158px;width:1px;height:32px;background:#a0a0a0"></div>
<div class="a" style="left:404px;top:158px;width:1px;height:32px;background:#a0a0a0"></div>
<div class="a" style="left:454px;top:158px;width:1px;height:32px;background:#a0a0a0"></div>
<div class="a" style="left:554px;top:158px;width:1px;height:32px;background:#a0a0a0"></div>
<div class="a" style="left:654px;top:158px;width:1px;height:32px;background:#a0a0a0"></div>
<div class="a" style="left:724px;top:158px;width:1px;height:32px;background:#a0a0a0"></div>
<div class="a" style="left:794px;top:158px;width:1px;height:32px;background:#a0a0a0"></div>
<div class="a" style="left:894px;top:158px;width:1px;height:32px;background:#a0a0a0"></div>
<div class="a t" style="left:1px;top:161px;width:97px;overflow:hidden">ST_21_27__000000</div>
<div class="a t" style="left:101px;top:161px;width:97px;overflow:hidden">FB-FA2_Änderung</div>
<div class="a t" style="left:201px;top:161px;width:42px;overflow:hidden">FB-FA</div>
<div class="a t" style="left:246px;top:161px;width:57px;overflow:hidden">02.01.2026</div>
<div class="a t" style="left:406px;top:161px;width:19px;overflow:hidden">Test</div>
<div class="a t" style="left:456px;top:161px;width:97px;overflow:hidden">60312BUCHG6_1013</div>
<div class="a t" style="left:430px;top:159px;width:23px;height:29px;box-sizing:border-box;border:1px solid #adadad;background:#e1e1e1;display:flex;align-items:center;justify-content:center;letter-spacing:0.6px">-&gt;</div>
<div class="a t" style="left:556px;top:175px;width:97px;overflow:hidden">60312BUCHG2_1013</div>
<div class="a t" style="left:-287px;top:161px;left:0;width:723px;text-align:right">-13,03 €</div>
<div class="a t" style="left:-287px;top:175px;left:0;width:723px;text-align:right">-13,03 €</div>
<div class="a" style="left:0px;top:232px;width:845px;height:1px;background:#a0a0a0"></div>
<div class="a" style="left:99px;top:190px;width:1px;height:43px;background:#a0a0a0"></div>
<div class="a" style="left:199px;top:190px;width:1px;height:43px;background:#a0a0a0"></div>
<div class="a" style="left:244px;top:190px;width:1px;height:43px;background:#a0a0a0"></div>
<div class="a" style="left:304px;top:190px;width:1px;height:43px;background:#a0a0a0"></div>
<div class="a" style="left:404px;top:190px;width:1px;height:43px;background:#a0a0a0"></div>
<div class="a" style="left:454px;top:190px;width:1px;height:43px;background:#a0a0a0"></div>
<div class="a" style="left:554px;top:190px;width:1px;height:43px;background:#a0a0a0"></div>
<div class="a" style="left:654px;top:190px;width:1px;height:43px;background:#a0a0a0"></div>
<div class="a" style="left:724px;top:190px;width:1px;height:43px;background:#a0a0a0"></div>
<div class="a" style="left:794px;top:190px;width:1px;height:43px;background:#a0a0a0"></div>
<div class="a" style="left:894px;top:190px;width:1px;height:43px;background:#a0a0a0"></div>
<div class="a t" style="left:1px;top:193px;width:97px;overflow:hidden">ST_21_27__000000</div>
<div class="a t" style="left:101px;top:193px;width:97px;overflow:hidden">FB-Fa1</div>
<div class="a t" style="left:201px;top:193px;width:42px;overflow:hidden">FB-FA</div>
<div class="a t" style="left:246px;top:193px;width:57px;overflow:hidden">01.01.2026</div>
<div class="a t" style="left:406px;top:193px;width:19px;overflow:hidden">Test</div>
<div class="a t" style="left:456px;top:193px;width:97px;overflow:hidden">60312BUCHG6_1013</div>
<div class="a t" style="left:430px;top:191px;width:23px;height:40px;box-sizing:border-box;border:1px solid #adadad;background:#e1e1e1;display:flex;align-items:center;justify-content:center;letter-spacing:0.6px">-&gt;</div>
<div class="a t" style="left:556px;top:207px;width:97px;overflow:hidden">60312BUCHG1_1013</div>
<div class="a t" style="left:556px;top:221px;width:97px;overflow:hidden">60312BUCHG2_1013</div>
<div class="a t" style="left:-287px;top:193px;left:0;width:723px;text-align:right">-18,97 €</div>
<div class="a t" style="left:-287px;top:207px;left:0;width:723px;text-align:right">-10,00 €</div>
<div class="a t" style="left:-287px;top:221px;left:0;width:723px;text-align:right">-8,97 €</div>
<div class="a" style="left:0px;top:236px;width:844px;height:31px;background:#0078d7"></div>
<div class="a" style="left:99px;top:236px;width:1px;height:31px;background:#8a9ab0"></div>
<div class="a" style="left:199px;top:236px;width:1px;height:31px;background:#8a9ab0"></div>
<div class="a" style="left:244px;top:236px;width:1px;height:31px;background:#8a9ab0"></div>
<div class="a" style="left:304px;top:236px;width:1px;height:31px;background:#8a9ab0"></div>
<div class="a" style="left:404px;top:236px;width:1px;height:31px;background:#8a9ab0"></div>
<div class="a" style="left:454px;top:236px;width:1px;height:31px;background:#8a9ab0"></div>
<div class="a" style="left:554px;top:236px;width:1px;height:31px;background:#8a9ab0"></div>
<div class="a" style="left:654px;top:236px;width:1px;height:31px;background:#8a9ab0"></div>
<div class="a" style="left:724px;top:236px;width:1px;height:31px;background:#8a9ab0"></div>
<div class="a" style="left:794px;top:236px;width:1px;height:31px;background:#8a9ab0"></div>
<div class="a" style="left:894px;top:236px;width:1px;height:31px;background:#8a9ab0"></div>
<div class="a" style="left:100px;top:236px;width:99px;height:31px;border:1px solid #000;border-left-width:2px;box-sizing:border-box"></div>
<div class="a t w" style="left:1px;top:239px;width:97px;overflow:hidden">ST_21_27__000000</div>
<div class="a t w" style="left:101px;top:239px;width:97px;overflow:hidden">FB-FA 01</div>
<div class="a t w" style="left:201px;top:239px;width:42px;overflow:hidden">FB-FA</div>
<div class="a t w" style="left:246px;top:239px;width:57px;overflow:hidden">10.12.2025</div>
<div class="a t w" style="left:406px;top:239px;width:19px;overflow:hidden">Korr</div>
<div class="a t w" style="left:456px;top:239px;width:97px;overflow:hidden">60312BUCHG6_1013</div>
<div class="a t" style="left:430px;top:237px;width:23px;height:29px;box-sizing:border-box;border:1px solid #adadad;background:#e1e1e1;display:flex;align-items:center;justify-content:center;letter-spacing:0.6px">-&gt;</div>
<div class="a t w" style="left:556px;top:253px;width:97px;overflow:hidden">60312BUCHG1_1013</div>
<div class="a t w" style="left:-287px;top:239px;left:0;width:723px;text-align:right">0,00 €</div>
<div class="a t w" style="left:-287px;top:253px;left:0;width:723px;text-align:right">0,00 €</div>
<div class="a" style="left:0px;top:0px;width:845px;height:38px;background:#fff;overflow:hidden">
<div class="a t" style="left:4px;top:6px;line-height:14px;width:94px;overflow:hidden">Buchungs-ID</div>
<div class="a" style="left:99px;top:0;width:1px;height:38px;background:#e5e5e5"></div>
<div class="a t" style="left:104px;top:6px;line-height:14px;width:94px;overflow:hidden">Buchungsnr.</div>
<div class="a" style="left:199px;top:0;width:1px;height:38px;background:#e5e5e5"></div>
<div class="a t" style="left:204px;top:6px;line-height:14px;width:39px;overflow:hidden">Art der<br>Zahlung</div>
<div class="a" style="left:244px;top:0;width:1px;height:38px;background:#e5e5e5"></div>
<div class="a t" style="left:249px;top:6px;line-height:14px;width:54px;overflow:hidden">Datum</div>
<div class="a" style="left:304px;top:0;width:1px;height:38px;background:#e5e5e5"></div>
<div class="a t" style="left:309px;top:6px;line-height:14px;width:94px;overflow:hidden">Verrechnungs-ID</div>
<div class="a" style="left:404px;top:0;width:1px;height:38px;background:#e5e5e5"></div>
<div class="a t" style="left:409px;top:6px;line-height:14px;width:44px;overflow:hidden">Notiz</div>
<div class="a" style="left:454px;top:0;width:1px;height:38px;background:#e5e5e5"></div>
<div class="a t" style="left:459px;top:6px;line-height:14px;width:94px;overflow:hidden">Buchungs-ID, auf<br>welche<br>die Buchung</div>
<div class="a" style="left:554px;top:0;width:1px;height:38px;background:#e5e5e5"></div>
<div class="a t" style="left:559px;top:6px;line-height:14px;width:94px;overflow:hidden">AZ-Bezug der<br>Buchung</div>
<div class="a" style="left:654px;top:0;width:1px;height:38px;background:#e5e5e5"></div>
<div class="a t" style="left:659px;top:6px;line-height:14px;width:64px;overflow:hidden">(Teil-)<br>Betrag in<br>EUR</div>
<div class="a" style="left:724px;top:0;width:1px;height:38px;background:#e5e5e5"></div>
<div class="a t" style="left:729px;top:6px;line-height:14px;width:64px;overflow:hidden">Abschließende<br>Zahlungsantrag</div>
<div class="a" style="left:794px;top:0;width:1px;height:38px;background:#e5e5e5"></div>
<div class="a t" style="left:799px;top:6px;line-height:14px;width:94px;overflow:hidden">Rechnungslegung</div>
<div class="a" style="left:894px;top:0;width:1px;height:38px;background:#e5e5e5"></div>
<div class="a" style="left:46px;top:1px"><svg width="9" height="5"><path d="M0.5 4.5L4.5 0.5L8.5 4.5" fill="none" stroke="#808080"/></svg></div>
</div>
</div>
<div class="a" style="left:1132px;top:512px;width:17px;height:38px;background:#f0f0f0"></div>
<div class="a" style="left:1132px;top:550px;width:17px;height:232px;background:#f0f0f0"></div>
<div class="a" style="left:1134px;top:626px;width:14px;height:137px;background:#cdcdcd"></div>
<div class="a" style="left:1136px;top:557px"><svg width="9" height="7"><path d="M1 6L4.5 2L8 6" fill="none" stroke="#606060" stroke-width="2"/></svg></div>
<div class="a" style="left:1136px;top:768px"><svg width="9" height="7"><path d="M1 1L4.5 5L8 1" fill="none" stroke="#606060" stroke-width="2"/></svg></div>
<div class="a" style="left:287px;top:782px;width:862px;height:15px;background:#f0f0f0"></div>
<div class="a" style="left:304px;top:783px;width:792px;height:13px;background:#cdcdcd"></div>
<div class="a" style="left:292px;top:785px"><svg width="8" height="9"><path d="M6 1L2 4.5L6 8" fill="none" stroke="#606060" stroke-width="2"/></svg></div>
<div class="a" style="left:1120px;top:785px"><svg width="8" height="9"><path d="M2 1L6 4.5L2 8" fill="none" stroke="#606060" stroke-width="2"/></svg></div>
<div class="a" style="left:283px;top:745px;width:851px;height:37px;border:3px solid #ed1c24;box-sizing:border-box"></div>
<div class="a" style="left:286px;top:748px;width:1px;height:31px;background:#0078d7"></div>
<div class="a t" style="left:1163px;top:512px;width:89px;height:35px;box-sizing:border-box;border:1px solid #adadad;background:#e1e1e1;color:#000;text-align:center;"><div style="position:absolute;left:0;right:0;top:10px">Neu</div></div>
<div class="a" style="left:1163px;top:553px;width:89px;height:35px;box-sizing:border-box;border:1px solid #adadad;background:#e1e1e1"></div>
<div class="a t" style="left:1177px;top:556px;line-height:14px">Finanzielle<br>Berichtigung</div>
<div class="a t" style="left:1163px;top:594px;width:89px;height:35px;box-sizing:border-box;border:1px solid #adadad;background:#e1e1e1;color:#000;text-align:center;"><div style="position:absolute;left:0;right:0;top:10px">Anzeigen</div></div>
<div class="a t" style="left:1163px;top:635px;width:89px;height:35px;box-sizing:border-box;border:1px solid #bfbfbf;background:#cccccc;color:#838383;text-align:center;"><div style="position:absolute;left:0;right:0;top:10px">Bearbeiten</div></div>
</div></div>
<div class="a t" style="left:1055px;top:829px;width:63px;height:21px;box-sizing:border-box;border:1px solid #bfbfbf;background:#cccccc;color:#838383;text-align:center;font-size:11.5px;letter-spacing:0"><div style="position:absolute;left:0;right:0;top:3px"><u>Z</u>urück</div></div>
<div class="a t" style="left:1130px;top:829px;width:63px;height:21px;box-sizing:border-box;border:1px solid #adadad;background:#e1e1e1;color:#000;text-align:center;font-size:11.5px;letter-spacing:0"><div style="position:absolute;left:0;right:0;top:3px"><u>W</u>eiter</div></div>
<div class="a t" style="left:1205px;top:829px;width:83px;height:21px;box-sizing:border-box;border:1px solid #adadad;background:#e1e1e1;color:#000;text-align:center;font-size:11.5px;letter-spacing:0"><div style="position:absolute;left:0;right:0;top:3px"><u>A</u>bbrechen</div></div></body></html>
